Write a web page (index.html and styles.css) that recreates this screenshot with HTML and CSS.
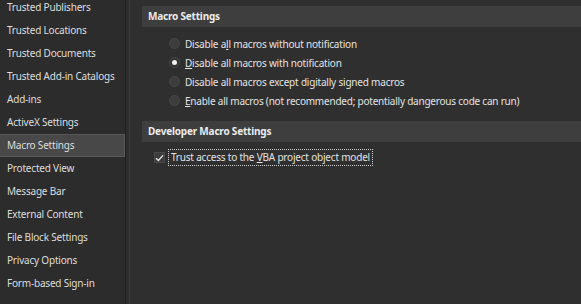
FILE: index.html
```html
<!DOCTYPE html>
<html>
<head>
<meta charset="utf-8">
<link rel="stylesheet" href="styles.css">
</head>
<body>
<div class="app">
  <nav class="sidebar">
    <ul class="nav-list">
      <li class="nav-item">Trusted Publishers</li>
      <li class="nav-item">Trusted Locations</li>
      <li class="nav-item">Trusted Documents</li>
      <li class="nav-item">Trusted Add-in Catalogs</li>
      <li class="nav-item">Add-ins</li>
      <li class="nav-item">ActiveX Settings</li>
      <li class="nav-item selected">Macro Settings</li>
      <li class="nav-item">Protected View</li>
      <li class="nav-item">Message Bar</li>
      <li class="nav-item">External Content</li>
      <li class="nav-item">File Block Settings</li>
      <li class="nav-item">Privacy Options</li>
      <li class="nav-item">Form-based Sign-in</li>
    </ul>
  </nav>
  <div class="divider"></div>
  <main class="content">
    <div class="section-head first">Macro Settings</div>
    <div class="radio-group">
      <div class="radio-row"><span class="radio"></span><span class="label">Disable a<u>l</u>l macros without notification</span></div>
      <div class="radio-row"><span class="radio checked"></span><span class="label"><u>D</u>isable all macros with notification</span></div>
      <div class="radio-row"><span class="radio"></span><span class="label">Disable all macros except digitally signed macros</span></div>
      <div class="radio-row"><span class="radio"></span><span class="label tight"><u>E</u>nable all macros (not recommended; potentially dangerous code can run)</span></div>
    </div>
    <div class="section-head second">Developer Macro Settings</div>
    <div class="check-row">
      <span class="checkbox"><svg width="9" height="8" viewBox="0 0 9 8"><path d="M1 4.2 L3.4 6.4 L8 1.4" fill="none" stroke="#e6e6e6" stroke-width="1.4"/></svg></span>
      <span class="check-label">Trust access to the <u>V</u>BA project object model</span>
    </div>
  </main>
</div>
</body>
</html>
```

FILE: styles.css
```css
html, body {
  margin: 0;
  padding: 0;
  background: #2f2f2f;
  overflow: hidden;
}
body {
  font-family: "Noto Sans", "Open Sans", sans-serif;
  font-size: 10px;
  letter-spacing: -0.2px;
  color: #e4e4e4;
}
.app {
  display: flex;
  height: 304px;
  width: 581px;
}
.sidebar {
  width: 125px;
  background: #2c2c2c;
  flex: none;
  overflow: hidden;
}
.nav-list {
  list-style: none;
  margin: -4px 0 0 0;
  padding: 0;
}
.nav-item {
  height: 23px;
  line-height: 23px;
  padding-left: 7px;
  white-space: nowrap;
  color: #dedede;
  box-sizing: border-box;
}
.nav-item.selected {
  background: #484848;
  border: 1px solid #585858;
  border-left: none;
  line-height: 21px;
  padding-left: 7px;
}
.divider {
  width: 5px;
  flex: none;
  border-left: 1px solid #1f1f1f;
  border-right: 1px solid #3b3b3b;
  background: #2e2e2e;
  box-sizing: border-box;
}
.content {
  flex: 1;
  padding-left: 12px;
  min-width: 0;
}
.section-head {
  height: 21px;
  line-height: 21px;
  background: #3e3e3e;
  font-weight: bold;
  padding-left: 6px;
  color: #ececec;
}
.section-head.first {
  margin-top: 6px;
}
.section-head.second {
  margin-top: 11px;
}
.radio-group {
  margin-top: 7px;
  display: flex;
  flex-direction: column;
  padding-left: 27px;
}
.radio-row {
  height: 19px;
  display: flex;
  align-items: center;
  gap: 5px;
  white-space: nowrap;
}
.radio {
  width: 11px;
  height: 11px;
  border-radius: 50%;
  background: #3d3d3d;
  border: 1px solid #484848;
  box-sizing: border-box;
  display: flex;
  align-items: center;
  justify-content: center;
  flex: none;
}
.radio.checked {
  background: #333;
  border-color: #4a4a4a;
}
.radio.checked::after {
  content: "";
  width: 5px;
  height: 5px;
  border-radius: 50%;
  background: #f4f4f4;
}
.label {
  color: #e4e4e4;
}
.label.tight {
  letter-spacing: -0.22px;
}
u {
  text-decoration-thickness: 1px;
  text-underline-offset: 1px;
}
.check-row {
  display: flex;
  align-items: center;
  margin-top: 7px;
  padding-left: 12px;
  height: 17px;
}
.checkbox {
  width: 11px;
  height: 11px;
  background: #3c3c3c;
  border: 1px solid #4a4a4a;
  box-sizing: border-box;
  display: flex;
  align-items: center;
  justify-content: center;
  flex: none;
}
.check-label {
  margin-left: 3px;
  border: 1px dotted #cfcfcf;
  padding: 0 2px 0 2px;
  line-height: 15px;
  white-space: nowrap;
}
```
